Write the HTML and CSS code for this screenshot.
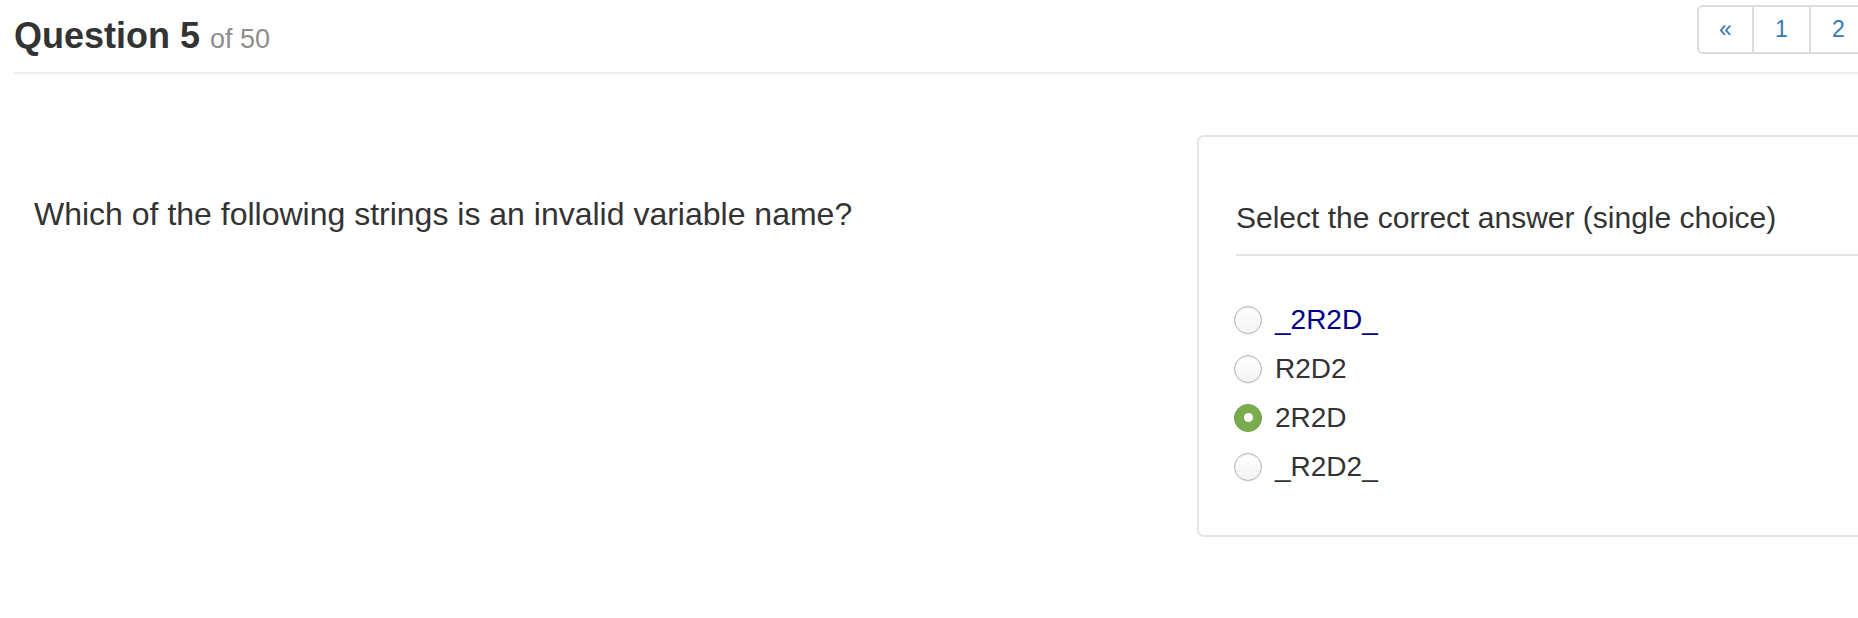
FILE: index.html
```html
<!DOCTYPE html>
<html lang="en">
<head>
<meta charset="utf-8">
<title>Question 5 of 50</title>
<link rel="stylesheet" href="styles.css">
</head>
<body>
<div class="page">
  <header class="page-header">
    <h1 class="title">Question 5 <small class="title-count">of 50</small></h1>
    <nav class="pager">
      <a class="pager-item pager-first" href="#">&laquo;</a>
      <a class="pager-item" href="#">1</a>
      <a class="pager-item" href="#">2</a>
      <a class="pager-item" href="#">3</a>
      <a class="pager-item" href="#">4</a>
    </nav>
  </header>
  <main class="row">
    <section class="question">
      <p class="question-text">Which of the following strings is an invalid variable name?</p>
    </section>
    <section class="answer-card">
      <h2 class="answer-title">Select the correct answer (single choice)</h2>
      <ul class="choices">
        <li class="choice"><span class="radio"></span><span class="choice-label choice-label-hl">_2R2D_</span></li>
        <li class="choice"><span class="radio"></span><span class="choice-label">R2D2</span></li>
        <li class="choice"><span class="radio radio-checked"></span><span class="choice-label">2R2D</span></li>
        <li class="choice"><span class="radio"></span><span class="choice-label">_R2D2_</span></li>
      </ul>
    </section>
  </main>
</div>
</body>
</html>
```
FILE: styles.css
```css
html, body {
  margin: 0;
  padding: 0;
  background: #fff;
  overflow: hidden;
}
body {
  font-family: "Liberation Sans", Arial, Helvetica, sans-serif;
  color: #333;
}
.page {
  width: 2200px;
  padding-left: 14px;
}
.page-header {
  display: grid;
  grid-template-columns: 1683px auto;
  align-items: start;
  padding-top: 5px;
  border-bottom: 2px solid #eeeeee;
  height: 74px;
  box-sizing: border-box;
}
.title {
  margin: 11px 0 0 0;
  font-size: 36px;
  line-height: 1.1;
  font-weight: 700;
  color: #333;
}
.title-count {
  font-size: 27px;
  font-weight: 400;
  color: #8e8e8e;
}
.pager {
  display: flex;
  border: 2px solid #dddddd;
  border-right: none;
  border-radius: 6px 0 0 6px;
  height: 49px;
  box-sizing: border-box;
  width: max-content;
}
.pager-item {
  display: flex;
  align-items: center;
  justify-content: center;
  width: 55px;
  font-size: 23px;
  color: #337ab7;
  text-decoration: none;
  border-left: 2px solid #dddddd;
}
.pager-first {
  border-left: none;
  width: 53px;
}
.row {
  display: grid;
  grid-template-columns: 1183px 1000px;
  padding-top: 61px;
}
.question {
  padding-left: 20px;
}
.question-text {
  margin: 58px 0 0 0;
  font-size: 32px;
  line-height: 43px;
}
.answer-card {
  border: 2px solid #e4e4e4;
  border-radius: 7px;
  padding: 62px 0 44px 37px;
}
.answer-title {
  margin: 0;
  font-size: 30px;
  font-weight: 400;
  line-height: 38px;
  padding-bottom: 17px;
  border-bottom: 2px solid #e6e6e6;
}
.choices {
  list-style: none;
  margin: 39px 0 0 0;
  padding: 0;
}
.choice {
  display: flex;
  align-items: center;
  height: 49px;
}
.radio {
  width: 28px;
  height: 28px;
  box-sizing: border-box;
  border-radius: 50%;
  border: 1px solid #b4b4b4;
  background: linear-gradient(#ffffff, #f3f3f3);
  box-shadow: inset 0 1px 1px rgba(0,0,0,0.08), 0 1px 1px rgba(0,0,0,0.06);
  margin-left: -2px;
  margin-right: 13px;
  display: flex;
  align-items: center;
  justify-content: center;
}
.radio-checked {
  border: 1px solid #6c9d45;
  background: #79ac4f;
  box-shadow: none;
}
.radio-checked::after {
  content: "";
  width: 9px;
  height: 9px;
  border-radius: 50%;
  background: #fff;
}
.choice-label {
  font-size: 28px;
  line-height: 1;
  color: #333;
}
.choice-label-hl {
  color: #00008b;
}
```
